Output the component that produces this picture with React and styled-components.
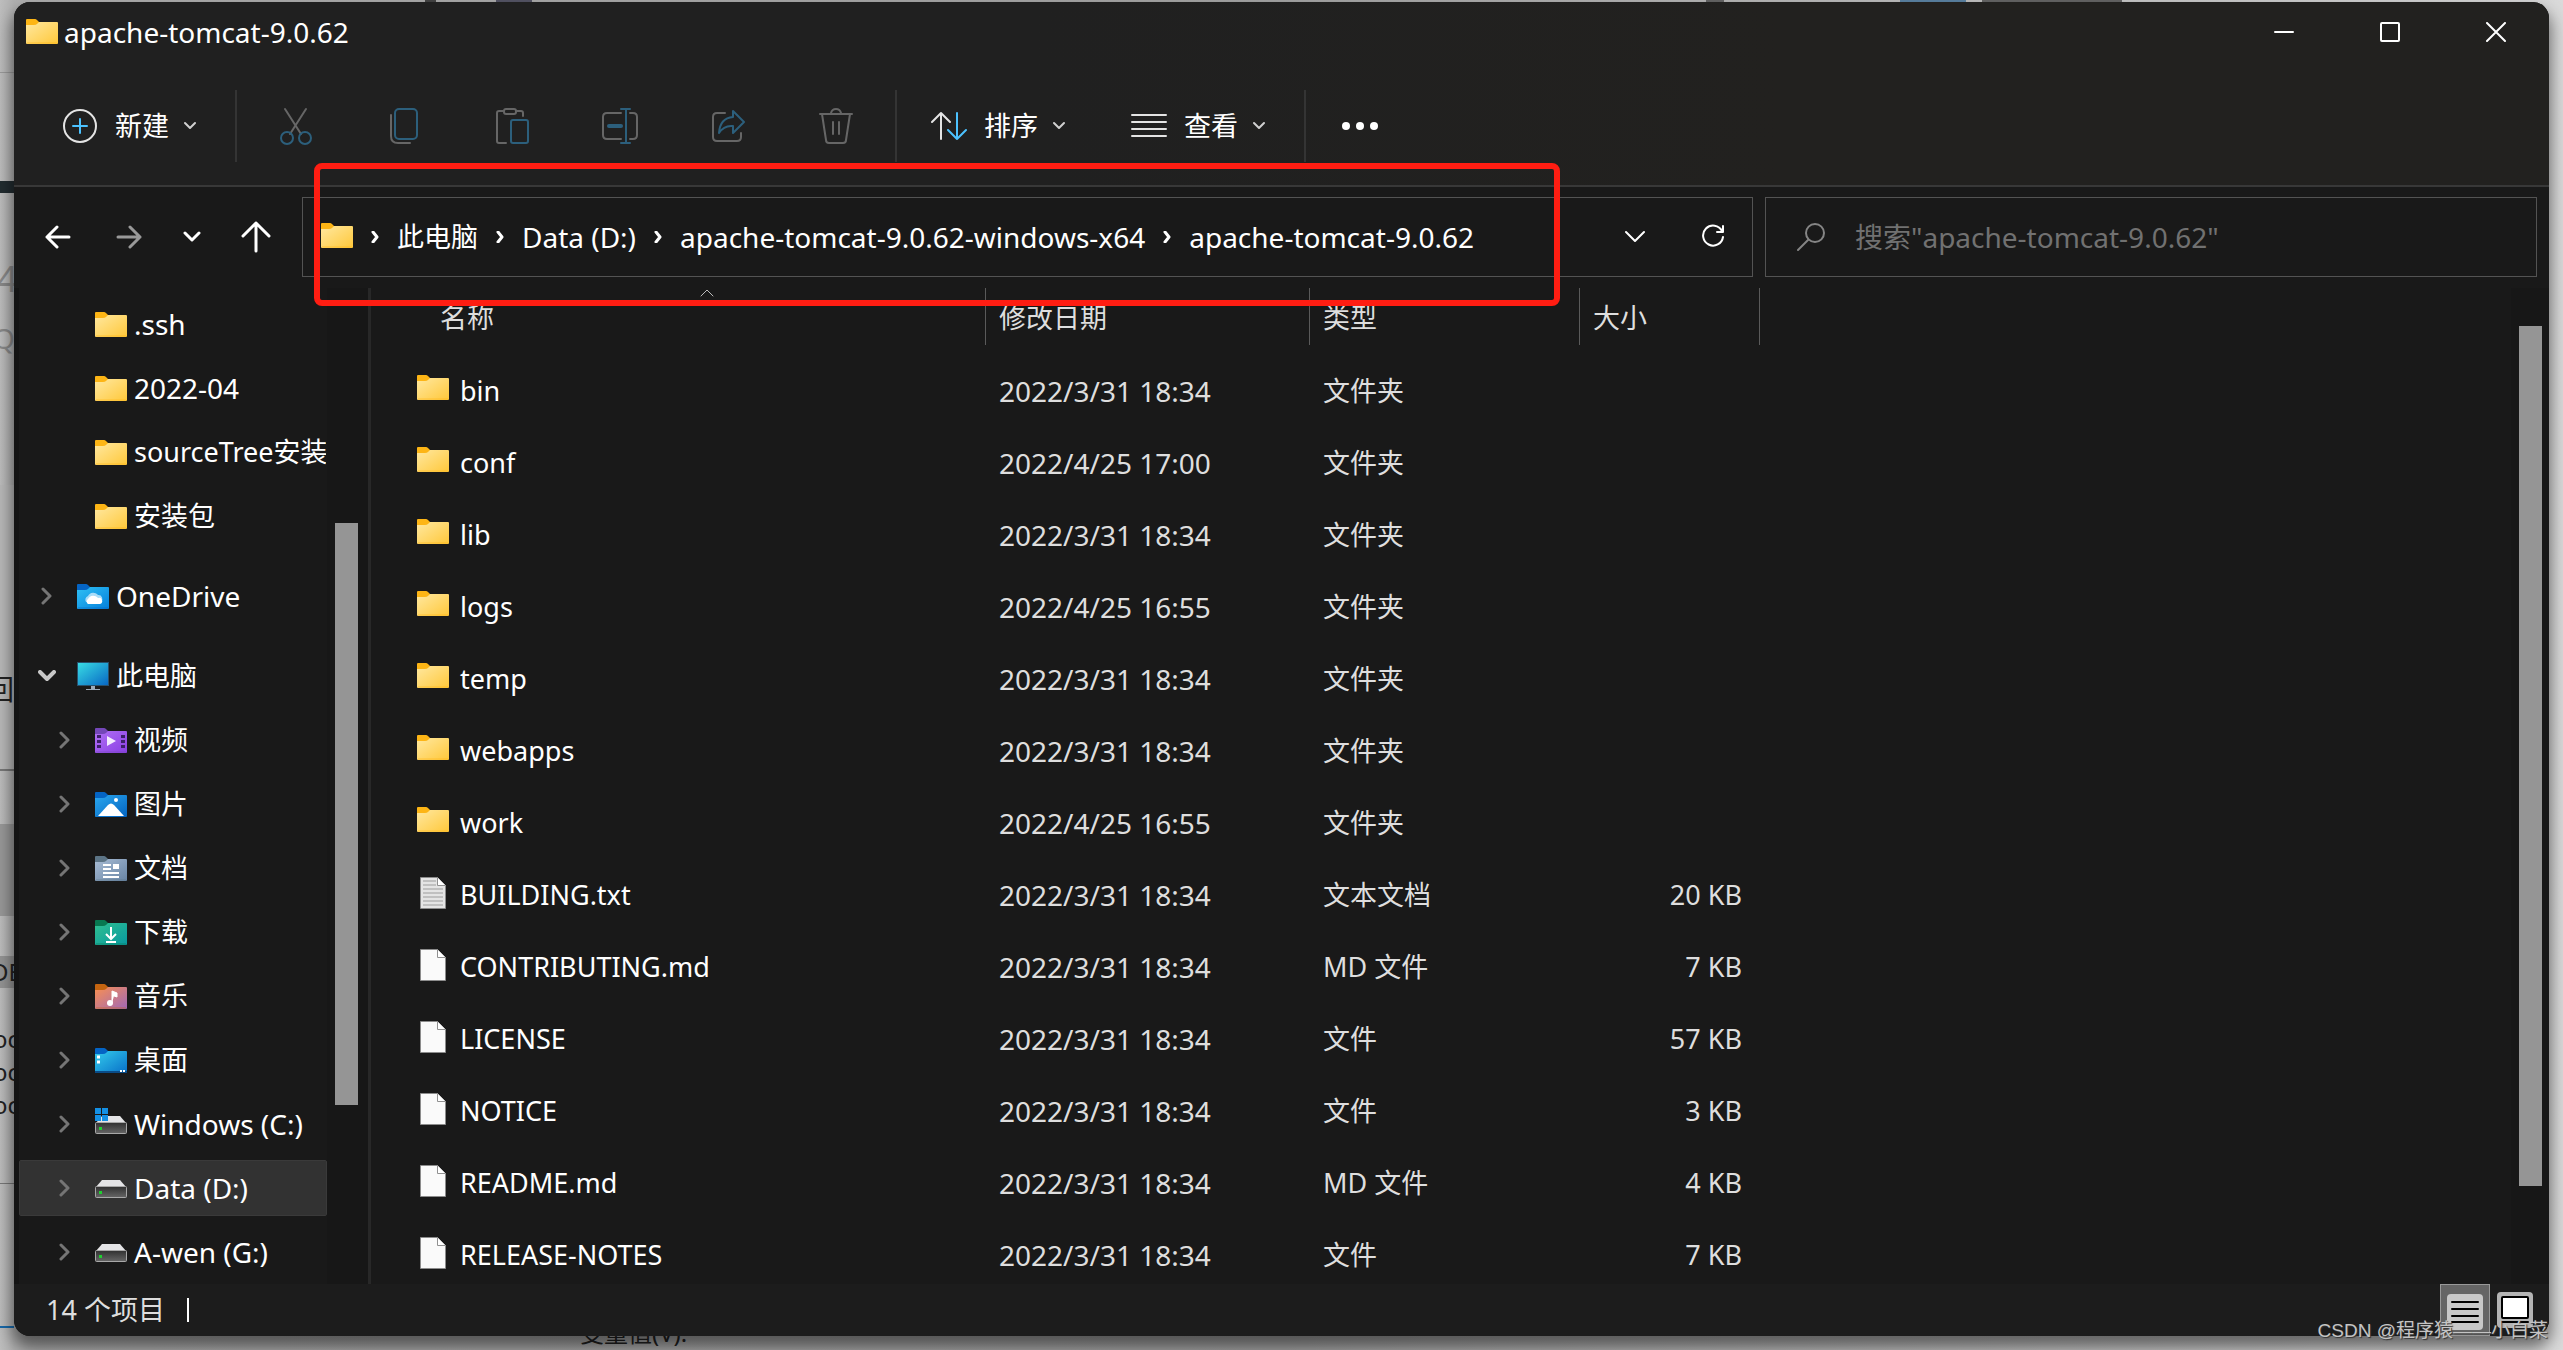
import React, { useState } from "react";
import styled, { createGlobalStyle } from "styled-components";

const GlobalStyle = createGlobalStyle`
  * {
    box-sizing: border-box;
  }
  body {
    margin: 0;
    background: #b4b4b4;
    color: #fff;
    font-family: "Noto Sans", "Noto Sans CJK SC", sans-serif;
    font-size: 27px;
    line-height: 36px;
  }
  button,
  input {
    font: inherit;
    color: inherit;
    background: none;
    border: 0;
    padding: 0;
  }
  svg {
    display: block;
    flex: none;
  }
`;

const sideItems = [
  { name: ".ssh", icon: "folder", level: 1, leaf: true },
  { name: "2022-04", icon: "folder", level: 1, leaf: true },
  { name: "sourceTree安装", icon: "folder", level: 1, leaf: true },
  { name: "安装包", icon: "folder", level: 1, leaf: true },
  { name: "OneDrive", icon: "onedrive", level: 0 },
  { name: "此电脑", icon: "pc", level: 0, open: true },
  { name: "视频", icon: "video", level: 1 },
  { name: "图片", icon: "picture", level: 1 },
  { name: "文档", icon: "document", level: 1 },
  { name: "下载", icon: "download", level: 1 },
  { name: "音乐", icon: "music", level: 1 },
  { name: "桌面", icon: "desktop", level: 1 },
  { name: "Windows (C:)", icon: "system", level: 1 },
  { name: "Data (D:)", icon: "drive", level: 1 },
  { name: "A-wen (G:)", icon: "drive", level: 1 },
];

const files = [
  { name: "bin", date: "2022/3/31 18:34", type: "文件夹", icon: "folder" },
  { name: "conf", date: "2022/4/25 17:00", type: "文件夹", icon: "folder" },
  { name: "lib", date: "2022/3/31 18:34", type: "文件夹", icon: "folder" },
  { name: "logs", date: "2022/4/25 16:55", type: "文件夹", icon: "folder" },
  { name: "temp", date: "2022/3/31 18:34", type: "文件夹", icon: "folder" },
  { name: "webapps", date: "2022/3/31 18:34", type: "文件夹", icon: "folder" },
  { name: "work", date: "2022/4/25 16:55", type: "文件夹", icon: "folder" },
  { name: "BUILDING.txt", date: "2022/3/31 18:34", type: "文本文档", size: "20 KB", icon: "text" },
  { name: "CONTRIBUTING.md", date: "2022/3/31 18:34", type: "MD 文件", size: "7 KB", icon: "file" },
  { name: "LICENSE", date: "2022/3/31 18:34", type: "文件", size: "57 KB", icon: "file" },
  { name: "NOTICE", date: "2022/3/31 18:34", type: "文件", size: "3 KB", icon: "file" },
  { name: "README.md", date: "2022/3/31 18:34", type: "MD 文件", size: "4 KB", icon: "file" },
  { name: "RELEASE-NOTES", date: "2022/3/31 18:34", type: "文件", size: "7 KB", icon: "file" },
];

const crumbs = [
  "此电脑",
  "Data (D:)",
  "apache-tomcat-9.0.62-windows-x64",
  "apache-tomcat-9.0.62",
];

// Latin labels are set one step larger than Chinese ones
const labelSize = (text) => (/^[\x20-\x7e]+$/.test(text) ? 28 : 27);

/* desktop and window frame */

const Desktop = styled.div`
  position: relative;
  height: 100vh;
  min-height: 700px;
  padding: 2px 14px 14px;
  overflow: hidden;
  background: linear-gradient(90deg, #bdbdbd 0, #b0b0b0 14px, #a6a6a6 50%, #dadada 100%);
`;
const Window = styled.div`
  position: relative;
  display: flex;
  flex-direction: column;
  height: 100%;
  border-radius: 16px;
  background: #191919;
  box-shadow: 0 10px 16px 2px rgba(0, 0, 0, 0.5);
`;
const Chrome = styled.header`
  border-radius: 16px 16px 0 0;
  border-bottom: 2px solid #383838;
  background: linear-gradient(90deg, #202020 40%, #22211f 70%);
`;
const TitleBar = styled.div`
  display: flex;
  align-items: center;
  height: 60px;
  padding-left: 12px;
`;
const Title = styled.h1`
  flex: 1;
  margin: 0 0 0 6px;
  font-size: 28px;
  font-weight: 400;
`;
const WindowButton = styled.button`
  display: flex;
  align-items: center;
  justify-content: center;
  width: 106px;
  height: 60px;
`;

/* command bar */

const Toolbar = styled.div`
  display: flex;
  align-items: center;
  height: 123px;
  padding-top: 5px;
`;
const Divider = styled.span`
  width: 2px;
  height: 72px;
  background: #343434;
`;
const DropButton = styled.button`
  display: flex;
  align-items: center;
  height: 72px;
  padding-right: 39px;
  padding-left: ${(props) => props.$before}px;
  svg:first-child {
    margin-right: 17px;
  }
  svg:last-child {
    margin-left: 15px;
  }
`;
const ToolGroup = styled.div`
  display: flex;
  padding: 0 5px;
`;
const ToolButton = styled.button`
  display: flex;
  align-items: center;
  justify-content: center;
  width: 108px;
  height: 72px;
`;

/* address row */

const AddressRow = styled.div`
  display: flex;
  padding: 10px 12px 11px 8px;
`;
const NavButton = styled.button`
  display: flex;
  align-items: center;
  justify-content: center;
  width: ${(props) => props.$width}px;
  height: 80px;
`;
const Boxes = styled.div`
  flex: 1;
  display: grid;
  grid-template-columns: 1451fr 772fr;
  gap: 12px;
  margin-left: 10px;
`;
const AddressBox = styled.nav`
  display: flex;
  align-items: center;
  height: 80px;
  border: 1px solid #535353;
  padding-left: 18px;
`;
const Crumbs = styled.div`
  flex: 1;
  display: flex;
  align-items: center;
  gap: 18px;
  min-width: 0;
  white-space: nowrap;
`;
const Crumb = styled.button`
  font-size: ${(props) => props.$size}px;
`;
const PathIcon = styled.span`
  padding-bottom: ${(props) => props.$lift}px;
`;
const BoxButton = styled.button`
  display: flex;
  align-items: center;
  justify-content: center;
  width: 78px;
  height: 76px;
`;
const SearchBox = styled.label`
  display: flex;
  align-items: center;
  gap: 30px;
  height: 80px;
  border: 1px solid #535353;
  padding-left: 31px;
  font-size: 28px;
`;
const SearchInput = styled.input`
  flex: 1;
  min-width: 0;
  outline: 0;
  &::placeholder {
    color: #717171;
    opacity: 1;
  }
`;

/* body */

const Body = styled.div`
  flex: 1;
  display: flex;
  min-height: 0;
  overflow: hidden;
`;
const Sidebar = styled.aside`
  flex: none;
  display: flex;
  width: 357px;
  border-left: 5px solid #141414;
  border-right: 3px solid #282828;
`;
const Tree = styled.ul`
  width: 308px;
  margin: 0;
  padding: 4px 0 0;
  overflow: hidden;
  list-style: none;
`;
const TreeItem = styled.li`
  padding: ${(props) => (props.$root ? 20 : 4)}px 0 4px;
`;
const TreeButton = styled.button`
  display: flex;
  align-items: center;
  width: 100%;
  height: 56px;
  padding-left: ${(props) => (props.$level ? 37 : 19)}px;
  border: 1px solid ${(props) => (props.$selected ? "#3a3a3a" : "transparent")};
  border-radius: 2px;
  background: ${(props) => (props.$selected ? "#323232" : "none")};
  white-space: nowrap;
  overflow: hidden;
`;
const Twisty = styled.span`
  flex: none;
  display: flex;
  align-items: center;
  justify-content: center;
  width: 16px;
  margin-right: 22px;
`;
const TreeLabel = styled.span`
  margin-left: 7px;
  font-size: ${(props) => props.$size}px;
`;
const ScrollTrack = styled.div`
  flex: none;
  display: grid;
  grid-template-rows: ${(props) => props.$rows};
  width: ${(props) => props.$width}px;
  padding: 0 7px 0 8px;
  background: #171717;
`;
const ScrollThumb = styled.div`
  grid-row: 2;
  width: 23px;
  background: #959595;
`;
const FilePane = styled.main`
  flex: 1;
  min-width: 0;
  overflow: hidden;
`;
const FileTable = styled.table`
  width: 100%;
  table-layout: fixed;
  border-collapse: collapse;
`;
const HeadCell = styled.th`
  height: 67px;
  padding: 0;
  vertical-align: top;
  font-weight: 400;
  text-align: left;
  color: #dedede;
`;
const HeadButton = styled.button`
  position: relative;
  display: block;
  width: ${(props) => (props.$first ? "calc(100% - 58px)" : "100%")};
  height: 57px;
  margin-left: ${(props) => (props.$first ? 58 : 0)}px;
  padding-top: 2px;
  padding-left: ${(props) => (props.$first ? 11 : 13)}px;
  border-right: 1px solid #5a5a5a;
  text-align: left;
`;
const SortMark = styled.span`
  position: absolute;
  top: 1px;
  left: calc(50% - 7px);
`;
const Row = styled.tr`
  height: 72px;
`;
const Cell = styled.td`
  padding: 0 ${(props) => (props.$right ? 18 : 0)}px 0 13px;
  text-align: ${(props) => (props.$right ? "right" : "left")};
  color: #dedede;
  white-space: nowrap;
`;
const DateCell = styled(Cell)`
  font-size: 28px;
`;
const NameCell = styled(Cell)`
  padding-left: 46px;
  color: #fff;
`;
const FileName = styled.div`
  display: flex;
  align-items: center;
  gap: 11px;
  svg {
    margin-bottom: 8px;
  }
`;

/* status bar */

const StatusBar = styled.footer`
  display: flex;
  align-items: center;
  height: 52px;
  padding: 0 9px 0 32px;
  border-radius: 0 0 16px 16px;
  background: #1c1c1c;
  color: #dedede;
`;
const StatusMark = styled.span`
  width: 2px;
  height: 24px;
  margin-left: 22px;
  background: #fff;
`;
const ViewButtons = styled.div`
  display: flex;
  margin-left: auto;
`;
const ViewButton = styled.button`
  display: flex;
  align-items: center;
  justify-content: center;
  width: 50px;
  height: 52px;
  padding-top: ${(props) => (props.$active ? 4 : 0)}px;
  border: 1px solid ${(props) => (props.$active ? "#999" : "transparent")};
  background: ${(props) => (props.$active ? "#656565" : "none")};
`;

/* things lying over or under the window */

const Highlight = styled.div`
  position: absolute;
  top: 161px;
  left: 300px;
  width: 1246px;
  height: 143px;
  border: 6px solid #ff1d12;
  border-radius: 8px;
  pointer-events: none;
`;
const Watermark = styled.div`
  position: absolute;
  right: 15px;
  bottom: 4px;
  font-family: "Liberation Sans", "Noto Sans CJK SC", sans-serif;
  font-size: 19px;
  line-height: 30px;
  color: #c4c4c4;
  text-shadow: 1px 1px 1px #333;
`;
const Backdrop = styled.div`
  position: absolute;
  inset: 0;
  overflow: hidden;
`;
const Scrap = styled.span`
  position: absolute;
  top: ${(props) => props.$top}px;
  left: ${(props) => props.$left}px;
  font-size: ${(props) => props.$size || 24}px;
  color: ${(props) => props.$color || "#222"};
  line-height: 30px;
  white-space: nowrap;
`;
const Band = styled.span`
  position: absolute;
  top: ${(props) => props.$top}px;
  left: ${(props) => props.$left || 0}px;
  width: ${(props) => props.$width || 14}px;
  height: ${(props) => props.$height}px;
  background: ${(props) => props.$color};
`;

/* drawings */

const folderTones = {
  folder: ["#fdb515", "#ffe8a0", "#ffc83a"],
  onedrive: ["#0464c4", "#2fc0f4", "#0480dc"],
  video: ["#7447b8", "#b070f4", "#8a3fe4"],
  picture: ["#0464c4", "#2aa8f0", "#0464c0"],
  document: ["#5c7486", "#a8bcd4", "#6884a4"],
  download: ["#087850", "#30c090", "#0898a0"],
  music: ["#c46410", "#fa9050", "#a068b8"],
  desktop: ["#0464c4", "#34ccec", "#0870c8"],
};

const Emblem = ({ kind }) => {
  if (kind === "onedrive")
    return (
      <>
        <path d="M9 22a4 4 0 0 1 2-6 6 6 0 0 1 10-1 4 4 0 0 1 3 7z" fill="#a8dcf8" />
        <path d="M11 24a3 3 0 0 1 0-5 6 6 0 0 1 10-1 3 3 0 0 1 2 6z" fill="#fff" />
      </>
    );
  if (kind === "video")
    return (
      <>
        <path d="M12 12v10l9-5z" fill="#f4ecff" />
        <path d="M4 11v14M28 11v14" stroke="#3c2068" strokeWidth="4" strokeDasharray="3 2" />
      </>
    );
  if (kind === "picture")
    return (
      <>
        <path d="M3 28l10-11q3-3 6 0l10 11z" fill="#fff" />
        <circle cx="21" cy="12" r="2" fill="#fff" />
      </>
    );
  if (kind === "document")
    return (
      <>
        <path d="M8 13h8M8 17h8M8 21h16M8 25h16" stroke="#fff" strokeWidth="2" />
        <path d="M18 12h6v5h-6z" fill="#fff" />
      </>
    );
  if (kind === "download")
    return (
      <path d="M16 11v11M11 18l5 5 5-5M11 26h10" fill="none" stroke="#fff" strokeWidth="2" />
    );
  if (kind === "music")
    return (
      <>
        <ellipse cx="15" cy="23" rx="3" ry="3" fill="#fff" />
        <path d="M17 23V11l5 2v4l-3-1" fill="#fff" stroke="#fff" />
      </>
    );
  if (kind === "desktop")
    return (
      <>
        <path d="M2 13h3M2 18h3" stroke="#fff" strokeWidth="3" />
        <path d="M0 27h32v2H0z" fill="#0a4c88" />
        <path d="M25 27h2M28 27h2" stroke="#fff" strokeWidth="2" />
      </>
    );
  return null;
};

const Folder = ({ kind }) => {
  const [tab, from, to] = folderTones[kind];
  return (
    <svg width="32" height="32" viewBox="0 0 32 32">
      <defs>
        <linearGradient id={"tone-" + kind} x1="0" y1="0" x2="1" y2="1">
          <stop offset="0" stopColor={from} />
          <stop offset="1" stopColor={to} />
        </linearGradient>
      </defs>
      <path d="M0 5q0-1 1-1h8q1 0 2 1l2 2h18v4l-20 1H0z" fill={tab} />
      <path
        d="M0 10h8q2 0 3-1l2-2h18q1 0 1 1v20q0 1-1 1H1q-1 0-1-1z"
        fill={"url(#tone-" + kind + ")"}
      />
      <path d="M1 28h30" stroke={tab} strokeOpacity="0.6" />
      <Emblem kind={kind} />
    </svg>
  );
};

const Pc = () => (
  <svg width="32" height="32" viewBox="0 0 32 32">
    <defs>
      <linearGradient id="screen" x1="0" y1="0" x2="1" y2="1">
        <stop offset="0" stopColor="#38dce4" />
        <stop offset="1" stopColor="#0868c4" />
      </linearGradient>
    </defs>
    <path d="M0 2h32v24H0z" fill="#28506c" />
    <path d="M1 3h30v22H1z" fill="url(#screen)" />
    <path d="M14 26h4v3h5v1H9v-1h5z" fill="#9caab8" />
  </svg>
);

const Drive = ({ system }) => (
  <svg width="32" height="32" viewBox="0 0 32 32">
    <defs>
      <linearGradient id="drive-face" x1="0" y1="0" x2="0" y2="1">
        <stop offset="0" stopColor="#303030" />
        <stop offset="1" stopColor="#666" />
      </linearGradient>
    </defs>
    <path d="M7 8h18l6 7H1z" fill="#e4e4e6" />
    <rect x="0.5" y="14.5" width="31" height="11" rx="1" fill="url(#drive-face)" stroke="#a8a8a8" />
    <rect x="4" y="19" width="3" height="3" fill="#20d030" />
    {system && (
      <path d="M0 0h6v6H0zM7 0h6v6H7zM0 7h6v6H0zM7 7h6v6H7z" fill="#1490e4" />
    )}
  </svg>
);

const Page = ({ lined }) => (
  <svg width="32" height="38" viewBox="0 -4 32 38">
    <path
      d="M3.500 1.500h17l8 8v23h-25z"
      fill={lined ? "#e4e4e4" : "#fafafa"}
      stroke="#8c8c8c"
    />
    <path d="M20.500 1.500v8h8" fill="#fff" stroke="#909090" />
    {lined && (
      <path
        d="M6 5h13M6 9h13M6 13h20M6 17h20M6 21h20M6 25h20M6 29h20"
        stroke="#9c9c9c"
        strokeWidth="1"
      />
    )}
  </svg>
);

const ItemIcon = ({ kind }) => {
  if (kind === "pc") return <Pc />;
  if (kind === "drive") return <Drive />;
  if (kind === "system") return <Drive system />;
  if (kind === "file") return <Page />;
  if (kind === "text") return <Page lined />;
  return <Folder kind={kind} />;
};

const Line = ({ w, h, d, color = "#fff", weight = 2, children }) => (
  <svg
    width={w}
    height={h}
    viewBox={`0 0 ${w} ${h}`}
    fill="none"
    stroke={color}
    strokeWidth={weight}
    strokeLinecap="round"
    strokeLinejoin="round"
  >
    {d && <path d={d} />}
    {children}
  </svg>
);

const SmallChevron = () => <Line w={12} h={10} d="M1 2l5 5 5-5" color="#d0d0d0" />;

const gray = "#666";
const blue = "#2c5f7c";

const tools = [
  {
    label: "剪切",
    icon: (
      <Line w={36} h={38} color={gray}>
        <path d="M7 2l16 25M28 2L12 27" />
        <circle cx="9" cy="31" r="6" stroke={blue} />
        <circle cx="27" cy="31" r="6" stroke={blue} />
      </Line>
    ),
  },
  {
    label: "复制",
    icon: (
      <Line w={36} h={38} color={gray}>
        <path d="M5 8v21q0 7 7 7h12" />
        <rect x="9" y="2" width="22" height="30" rx="4" stroke={blue} />
      </Line>
    ),
  },
  {
    label: "粘贴",
    icon: (
      <Line w={36} h={38} color={gray}>
        <path d="M12 36H5q-2 0-2-2V6q0-2 2-2h5M22 4h5q2 0 2 2v3" />
        <rect x="10" y="2" width="12" height="5" rx="2" />
        <rect x="17" y="13" width="17" height="23" rx="2" stroke={blue} />
      </Line>
    ),
  },
  {
    label: "重命名",
    icon: (
      <Line w={38} h={38} color={gray}>
        <path d="M20 6H6q-4 0-4 4v18q0 4 4 4h14M29 6h3q4 0 4 4v18q0 4-4 4h-3" />
        <path d="M20 2h9M20 36h9M25 2v34" stroke={blue} />
        <path d="M8 19h12" stroke={blue} strokeWidth="4" />
      </Line>
    ),
  },
  {
    label: "共享",
    icon: (
      <Line w={36} h={38} color={gray}>
        <path d="M15 6H7q-4 0-4 4v20q0 4 4 4h20q4 0 4-4v-4" />
        <path d="M23 4l11 11-11 11v-7q-9-1-14 7 1-15 14-16z" stroke={blue} />
      </Line>
    ),
  },
  {
    label: "删除",
    icon: (
      <Line w={36} h={38} color={gray}>
        <path d="M2 7h32M4 7l4 26q0 3 3 3h14q3 0 3-3l4-26M13 6q1-4 5-4t5 4M15 15v12M21 15v12" />
      </Line>
    ),
  },
];

const App = () => {
  const [selected, setSelected] = useState("Data (D:)");
  const [query, setQuery] = useState("");
  return (
    <Desktop>
      <GlobalStyle />
      <Backdrop aria-hidden="true">
        <Band $top={0} $height={2} $left={425} $width={11} $color="#444" />
        <Band $top={0} $height={2} $left={496} $width={36} $color="#556" />
        <Band $top={0} $height={2} $left={1706} $width={18} $color="#666" />
        <Band $top={0} $height={2} $left={1900} $width={66} $color="#5c84a4" />
        <Band $top={0} $height={2} $left={1982} $width={140} $color="#666" />
        <Band $top={72} $height={1} $color="#999" />
        <Band $top={181} $height={12} $color="#222c30" />
        <Band $top={485} $height={284} $color="#b8b8b8" />
        <Band $top={769} $height={2} $color="#777" />
        <Band $top={824} $height={92} $color="#989898" />
        <Band $top={956} $height={32} $color="#949494" />
        <Band $top={1183} $height={1} $color="#777" />
        <Band $top={1326} $height={2} $color="#1868a8" />
        <Scrap $top={264} $left={-3} $size={36} $color="#888">4</Scrap>
        <Scrap $top={323} $left={-7} $size={28} $color="#888">Q</Scrap>
        <Scrap $top={674} $left={-14} $size={28}>回</Scrap>
        <Scrap $top={957} $left={-9}>DE</Scrap>
        <Scrap $top={1024} $left={-7}>oc</Scrap>
        <Scrap $top={1057} $left={-7}>oc</Scrap>
        <Scrap $top={1090} $left={-7}>oc</Scrap>
        <Scrap $top={1318} $left={580}>变量值(V):</Scrap>
      </Backdrop>
      <Window>
        <Chrome>
          <TitleBar>
            <PathIcon $lift={3}>
              <Folder kind="folder" />
            </PathIcon>
            <Title>apache-tomcat-9.0.62</Title>
            <WindowButton aria-label="最小化">
              <Line w={20} h={20} d="M1 10h18" />
            </WindowButton>
            <WindowButton aria-label="最大化">
              <Line w={20} h={20}>
                <rect x="1" y="1" width="18" height="18" rx="1" />
              </Line>
            </WindowButton>
            <WindowButton aria-label="关闭">
              <Line w={20} h={20} d="M1 1l18 18M19 1L1 19" />
            </WindowButton>
          </TitleBar>
          <Toolbar>
            <DropButton $before={48}>
              <Line w={36} h={36}>
                <circle cx="18" cy="18" r="16" stroke="#e4e4e4" />
                <path d="M18 11v14M11 18h14" stroke="#4cc2ff" />
              </Line>
              新建
              <SmallChevron />
            </DropButton>
            <Divider />
            <ToolGroup>
              {tools.map((tool) => (
                <ToolButton key={tool.label} aria-label={tool.label}>
                  {tool.icon}
                </ToolButton>
              ))}
            </ToolGroup>
            <Divider />
            <DropButton $before={34}>
              <Line w={36} h={30} color="#e4e4e4">
                <path d="M10 28V2M1 11l9-9 9 9" />
                <path d="M26 2v26M17 19l9 9 9-9" stroke="#4cc2ff" />
              </Line>
              排序
              <SmallChevron />
            </DropButton>
            <DropButton $before={27}>
              <Line w={36} h={26} d="M1 2h34M1 9h34M1 16h34M1 23h34" color="#e4e4e4" />
              查看
              <SmallChevron />
            </DropButton>
            <Divider />
            <ToolButton aria-label="查看更多">
              <svg width="36" height="8" viewBox="0 0 36 8" fill="#fff">
                <circle cx="4" cy="4" r="4" />
                <circle cx="18" cy="4" r="4" />
                <circle cx="32" cy="4" r="4" />
              </svg>
            </ToolButton>
          </Toolbar>
        </Chrome>

        <AddressRow>
          <NavButton $width={72} aria-label="后退">
            <Line w={26} h={24} d="M12 2L2 12l10 10M2 12h22" weight={3} />
          </NavButton>
          <NavButton $width={70} aria-label="前进">
            <Line w={26} h={24} d="M14 2l10 10-10 10M24 12H2" color="#999" weight={3} />
          </NavButton>
          <NavButton $width={56} aria-label="最近的位置">
            <Line w={18} h={12} d="M2 2l7 7 7-7" weight={3} />
          </NavButton>
          <NavButton $width={72} aria-label="上移">
            <Line w={30} h={32} d="M15 30V2M2 15L15 2l13 13" weight={3} />
          </NavButton>
          <Boxes>
            <AddressBox aria-label="地址">
              <Crumbs>
                <PathIcon $lift={5}>
                  <Folder kind="folder" />
                </PathIcon>
                {crumbs.map((crumb) => (
                  <React.Fragment key={crumb}>
                    <Line w={8} h={12} d="M2 1l4 5-4 5" weight={3} />
                    <Crumb $size={labelSize(crumb)}>{crumb}</Crumb>
                  </React.Fragment>
                ))}
              </Crumbs>
              <BoxButton aria-label="以前的位置">
                <Line w={20} h={14} d="M1 2l9 9 9-9" />
              </BoxButton>
              <BoxButton aria-label="刷新">
                <Line w={26} h={26} d="M22 7A10 10 0 1 0 23 13M23 2v6h-6" />
              </BoxButton>
            </AddressBox>
            <SearchBox aria-label="搜索">
              <Line w={28} h={28} color="#858585">
                <circle cx="18" cy="10" r="9" />
                <path d="M11 17L1 27" />
              </Line>
              <SearchInput
                value={query}
                onChange={(e) => setQuery(e.target.value)}
                placeholder={'搜索"apache-tomcat-9.0.62"'}
              />
            </SearchBox>
          </Boxes>
        </AddressRow>

        <Body>
          <Sidebar>
            <Tree>
              {sideItems.map((item) => (
                <TreeItem key={item.name} $root={item.level === 0}>
                  <TreeButton
                    $level={item.level}
                    $selected={selected === item.name}
                    onClick={() => setSelected(item.name)}
                  >
                    <Twisty>
                      {item.open ? (
                        <Line w={18} h={12} d="M2 2l7 7 7-7" color="#c8c8c8" weight={4} />
                      ) : item.leaf ? null : (
                        <Line w={12} h={18} d="M2 2l7 7-7 7" color="#757575" weight={3} />
                      )}
                    </Twisty>
                    <ItemIcon kind={item.icon} />
                    <TreeLabel $size={labelSize(item.name)}>{item.name}</TreeLabel>
                  </TreeButton>
                </TreeItem>
              ))}
            </Tree>
            <ScrollTrack $rows="235fr 582fr 179fr" $width={41}>
              <ScrollThumb />
            </ScrollTrack>
          </Sidebar>
          <FilePane>
            <FileTable>
              <colgroup>
                <col width="615" />
                <col width="324" />
                <col width="270" />
                <col width="180" />
                <col />
              </colgroup>
              <thead>
                <tr>
                  <HeadCell>
                    <HeadButton $first>
                      <SortMark>
                        <Line w={14} h={8} d="M1 7l6-6 6 6" color="#bbb" weight={1} />
                      </SortMark>
                      名称
                    </HeadButton>
                  </HeadCell>
                  <HeadCell>
                    <HeadButton>修改日期</HeadButton>
                  </HeadCell>
                  <HeadCell>
                    <HeadButton>类型</HeadButton>
                  </HeadCell>
                  <HeadCell>
                    <HeadButton>大小</HeadButton>
                  </HeadCell>
                  <HeadCell />
                </tr>
              </thead>
              <tbody>
                {files.map((file) => (
                  <Row key={file.name}>
                    <NameCell>
                      <FileName>
                        <ItemIcon kind={file.icon} />
                        {file.name}
                      </FileName>
                    </NameCell>
                    <DateCell>{file.date}</DateCell>
                    <Cell>{file.type}</Cell>
                    <Cell $right>{file.size}</Cell>
                    <Cell />
                  </Row>
                ))}
              </tbody>
            </FileTable>
          </FilePane>
          <ScrollTrack $rows="38fr 860fr 98fr" $width={38}>
            <ScrollThumb />
          </ScrollTrack>
        </Body>

        <StatusBar>
          14 个项目
          <StatusMark />
          <ViewButtons>
            <ViewButton $active aria-label="详细信息">
              <svg width="36" height="36" viewBox="0 0 36 36">
                <rect width="36" height="36" rx="4" fill="#c8c8c8" />
                <path
                  d="M5 8h26M5 15h26M5 22h26M5 28h26"
                  stroke="#000"
                  strokeWidth="2"
                  strokeLinecap="round"
                />
              </svg>
            </ViewButton>
            <ViewButton aria-label="大缩略图">
              <svg width="36" height="36" viewBox="0 0 36 36">
                <rect width="36" height="36" rx="4" fill="#b4b4b4" />
                <rect x="5" y="5" width="26" height="21" rx="1" fill="#fff" stroke="#000" strokeWidth="2" />
                <path d="M5 30h26" stroke="#000" strokeWidth="2" strokeLinecap="round" />
              </svg>
            </ViewButton>
          </ViewButtons>
        </StatusBar>
        <Highlight />
      </Window>
      <Watermark>CSDN @程序猿——小白菜</Watermark>
    </Desktop>
  );
};

export default App;
